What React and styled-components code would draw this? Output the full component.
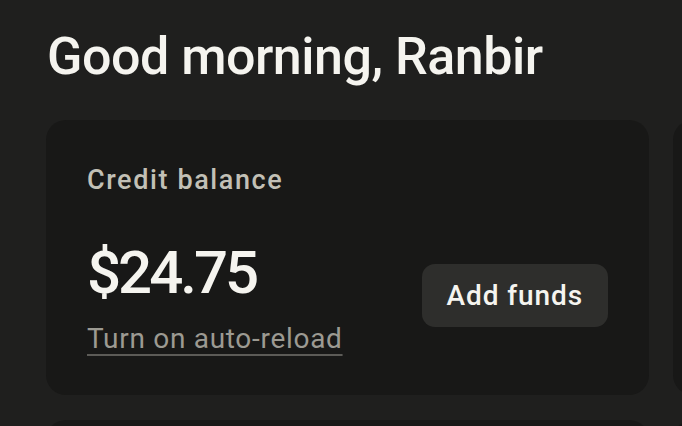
import styled, { createGlobalStyle } from 'styled-components';

const GlobalStyle = createGlobalStyle`
  html, body {
    margin: 0;
    background: #1f1f1e;
    font-family: Roboto, "Noto Sans", sans-serif;
    overflow: hidden;
  }
`;

const Page = styled.main`
  padding: 27px 0 0 47px;
  color: #f5f4ef;
`;

const Greeting = styled.h1`
  margin: 0 0 33px;
  font-size: 52px;
  font-weight: 500;
  letter-spacing: -0.5px;
  line-height: 60px;
`;

const Cards = styled.div`
  display: grid;
  grid-template-columns: 603px 603px;
  grid-auto-rows: 275px;
  gap: 25px 24px;
  margin-left: -1px;
`;

const Card = styled.section`
  background: #181817;
  border-radius: 20px;
  padding: 43px 41px;
  box-sizing: border-box;
`;

const Label = styled.div`
  font-size: 27px;
  font-weight: 500;
  letter-spacing: 1.6px;
  color: #c2c0b6;
  line-height: 34px;
`;

const Row = styled.div`
  display: flex;
  align-items: center;
  justify-content: space-between;
  margin-top: 44px;
`;

const Amount = styled.div`
  font-size: 60px;
  font-weight: 500;
  letter-spacing: -3px;
  line-height: 64px;
`;

const ReloadLink = styled.a`
  display: inline-block;
  margin-top: 17px;
  font-size: 28px;
  letter-spacing: 0.7px;
  color: #9c9a92;
  text-decoration: underline;
  text-decoration-color: #5c5b57;
  text-underline-offset: 6px;
  text-decoration-thickness: 2px;
  cursor: pointer;
`;

const Button = styled.button`
  background: #2e2e2c;
  color: #f5f4ef;
  border: none;
  border-radius: 13px;
  height: 63px;
  padding: 0 25px;
  margin-bottom: 5px;
  font-family: inherit;
  font-size: 28px;
  font-weight: 500;
  letter-spacing: 0.9px;
`;

export default function App() {
  return (
    <>
      <GlobalStyle />
      <Page>
        <Greeting>Good morning, Ranbir</Greeting>
        <Cards>
          <Card>
            <Label>Credit balance</Label>
            <Row>
              <div>
                <Amount>$24.75</Amount>
                <ReloadLink>Turn on auto-reload</ReloadLink>
              </div>
              <Button>Add funds</Button>
            </Row>
          </Card>
          <Card />
          <Card />
          <Card />
        </Cards>
      </Page>
    </>
  );
}
